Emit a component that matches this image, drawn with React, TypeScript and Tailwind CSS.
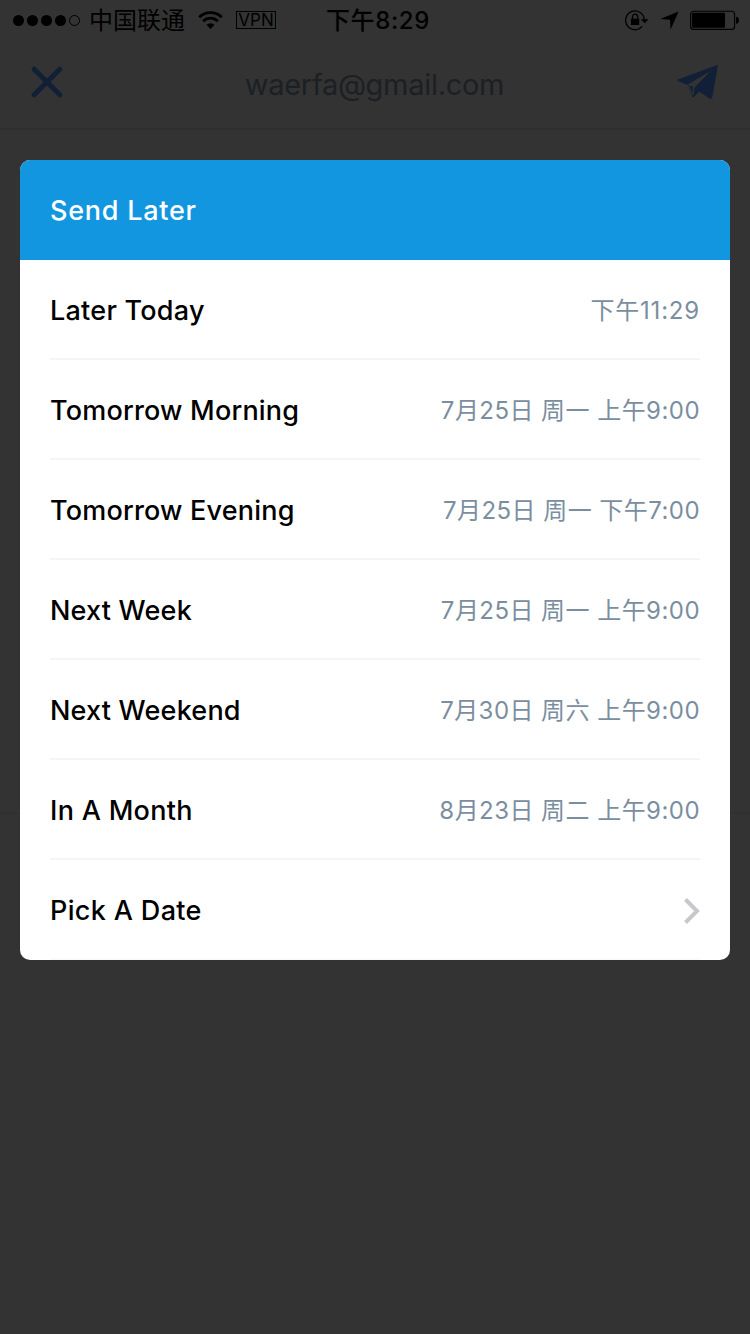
import React from 'react';

interface SendOption {
  label: string;
  labelClass: string;
  time?: string;
  timeClass?: string;
}

const options: SendOption[] = [
  { label: 'Later Today', labelClass: 'tracking-[0.25px]', time: '下午11:29', timeClass: 'tracking-[0.8px]' },
  { label: 'Tomorrow Morning', labelClass: 'tracking-[0.2px]', time: '7月25日 周一 上午9:00', timeClass: 'tracking-[0.45px]' },
  { label: 'Tomorrow Evening', labelClass: 'tracking-[0.2px]', time: '7月25日 周一 下午7:00', timeClass: 'tracking-[0.45px]' },
  { label: 'Next Week', labelClass: 'tracking-[0.2px]', time: '7月25日 周一 上午9:00', timeClass: 'tracking-[0.45px]' },
  { label: 'Next Weekend', labelClass: 'tracking-[0.2px]', time: '7月30日 周六 上午9:00', timeClass: 'tracking-[0.45px]' },
  { label: 'In A Month', labelClass: 'tracking-[0.3px]', time: '8月23日 周二 上午9:00', timeClass: 'tracking-[0.45px]' },
  { label: 'Pick A Date', labelClass: 'tracking-[0.35px]' },
];

const SignalDots: React.FC = () => (
  <svg width="67" height="12" viewBox="0 0 67 12">
    {[5.5, 19.5, 33.5, 47.5].map((cx) => (
      <circle key={cx} cx={cx} cy="6.5" r="5.5" fill="#000" />
    ))}
    <circle cx="61.5" cy="6.5" r="5" fill="none" stroke="#000" />
  </svg>
);

const WifiIcon: React.FC = () => (
  <svg width="25" height="18" viewBox="0 0 25 18">
    <g fill="none" stroke="#000" strokeWidth="2.8">
      <path d="M1.2 6.2a16 16 0 0 1 22.6 0" />
      <path d="M5.1 10.2a10.5 10.5 0 0 1 14.8 0" />
    </g>
    <path d="M12.5 18l-4-4.2a5.8 5.8 0 0 1 8 0z" fill="#000" />
  </svg>
);

const RotationLockIcon: React.FC = () => (
  <svg width="24" height="21" viewBox="0 0 24 21">
    <path d="M19.4 9.6A9.4 9.4 0 1 0 17.2 16.4" fill="none" stroke="#000" strokeWidth="1.3" />
    <path d="M15.8 9.2h7.8l-3.9 4z" fill="#000" />
    <rect x="6" y="8.7" width="8.2" height="6.3" fill="#000" />
    <path d="M7.5 9.2V6.8a2.6 2.6 0 0 1 5.2 0v2.4" fill="none" stroke="#000" strokeWidth="1.3" />
  </svg>
);

const LocationIcon: React.FC = () => (
  <svg width="19" height="19" viewBox="0 0 19 19">
    <path d="M18.6.4L10.6 18.4 10 8.8.2 7.9z" fill="#000" />
  </svg>
);

const BatteryIcon: React.FC = () => (
  <svg width="50" height="20" viewBox="0 0 50 20">
    <rect x="0.6" y="1.2" width="44" height="18.2" rx="3" fill="none" stroke="#000" strokeWidth="1.1" />
    <rect x="2" y="2.8" width="33" height="15" rx="1.2" fill="#000" />
    <path d="M46 6.8c2 .2 3 1.6 3 3.5s-1 3.3-3 3.5z" fill="#000" />
  </svg>
);

const StatusBar: React.FC = () => (
  <div className="flex h-10 items-center pl-[13px] pr-[10px] text-2xl text-black">
    <SignalDots />
    <span className="ml-[9px] pt-[2px] leading-10">中国联通</span>
    <span className="ml-[13px]">
      <WifiIcon />
    </span>
    <span className="ml-[13px] flex h-[18px] w-[40px] items-center justify-center border border-black text-[17px] leading-none">
      VPN
    </span>
    <span className="ml-[50px] pt-[2px] font-medium leading-10 tracking-[0.6px]">下午8:29</span>
    <div className="ml-auto flex items-center">
      <RotationLockIcon />
      <span className="ml-[11px]">
        <LocationIcon />
      </span>
      <span className="ml-[11px]">
        <BatteryIcon />
      </span>
    </div>
  </div>
);

const ComposeHeader: React.FC = () => (
  <header className="flex h-[90px] items-center justify-between border-b-2 border-[#2f2f2f] px-[31px]">
    <svg width="32" height="32" viewBox="0 0 32 32" className="mb-1">
      <path d="M3.2 3.2l25.6 25.6M28.8 3.2L3.2 28.8" stroke="#112036" strokeWidth="5" strokeLinecap="round" />
    </svg>
    <span className="ml-[9px] pt-[2px] text-[29px] leading-[36px] tracking-[-0.3px] text-[#1c2024]">
      waerfa@gmail.com
    </span>
    <svg width="42" height="36" viewBox="0 0 42 36" className="mb-1">
      <path
        d="M39.5 1.2Q41 .8 40.7 2.5L35.2 33.6Q34.6 35.6 32.6 34.6L22.3 27.6 16.8 33Q15.6 33.8 15 32.3L11.2 21 .8 17Q-.2 16.3.9 15.6z"
        fill="#112036"
      />
      <path d="M11.2 20.2L33.5 7 17.6 23.6 16.4 31.6 15.2 31.2z" fill="#333" />
      <path d="M12.5 21.2L16.2 22.8 15.6 29.8z" fill="#112036" />
    </svg>
  </header>
);

const OptionRow: React.FC<{ option: SendOption }> = ({ option }) => (
  <li className="flex h-[100px] items-center justify-between border-b-2 border-[#f5f5f5] pt-1 last:border-[#fafafa]">
    <span className={`text-[27px] font-medium text-black ${option.labelClass}`}>{option.label}</span>
    {option.time ? (
      <span className={`text-2xl text-[#7b8ea0] ${option.timeClass}`}>{option.time}</span>
    ) : (
      <svg width="16" height="26" viewBox="0 0 16 26">
        <path d="M1.5 1.5L13 13 1.5 24.5" fill="none" stroke="#c7c7cc" strokeWidth="4" />
      </svg>
    )}
  </li>
);

const App: React.FC = () => {
  return (
    <div className="relative h-[1334px] w-[750px] overflow-hidden bg-[#333] font-['Inter','Noto_Sans_CJK_SC',sans-serif]">
      <StatusBar />
      <ComposeHeader />
      <main className="h-[684px] border-b-2 border-[#303030]" />

      {/* Send later dialog */}
      <section className="absolute inset-x-5 top-[160px] overflow-hidden rounded-[10px] bg-white">
        <h1 className="flex h-[100px] items-center bg-[#1296e0] px-[30px] pt-[2px] text-[27px] font-medium tracking-[0.75px] text-white">
          Send Later
        </h1>
        <ul className="px-[30px]">
          {options.map((option) => (
            <OptionRow key={option.label} option={option} />
          ))}
        </ul>
      </section>
    </div>
  );
};

export default App;
